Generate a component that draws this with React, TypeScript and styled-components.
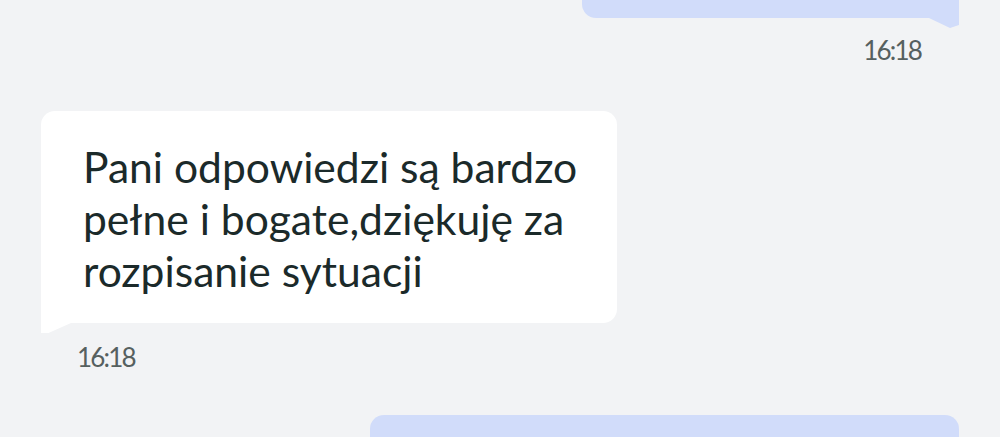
import styled, { createGlobalStyle } from "styled-components";

const GlobalStyle = createGlobalStyle`
  html, body {
    margin: 0;
    padding: 0;
    background: #f2f3f5;
  }
  body {
    font-family: Lato, "Noto Sans", sans-serif;
    overflow: hidden;
  }
`;

// Whole chat area
const Thread = styled.div`
  width: 1000px;
  height: 437px;
  display: flex;
  flex-direction: column;
  overflow: hidden;
  background: #f2f3f5;
  & > * {
    flex-shrink: 0;
  }
`;

// Bubble, side decides colour and tail corner
const Bubble = styled.div<{ $mine?: boolean }>`
  position: relative;
  box-sizing: border-box;
  background: ${(p) => (p.$mine ? "#d1dcfa" : "#ffffff")};
  border-radius: 14px;
  border-bottom-${(p) => (p.$mine ? "right" : "left")}-radius: 0;
  align-self: ${(p) => (p.$mine ? "flex-end" : "flex-start")};
  color: #1b2a2a;
  font-size: 42.6px;
  line-height: 52px;

  &::after {
    content: "";
    position: absolute;
    top: 100%;
    ${(p) => (p.$mine ? "right: 0;" : "left: 0;")}
    width: 30px;
    height: 10px;
    background: inherit;
    clip-path: ${(p) =>
      p.$mine
        ? "polygon(0 0, 100% 0, 100% 70%, 70% 100%)"
        : "polygon(0 0, 100% 0, 25% 100%, 0 100%)"};
  }
`;

const TopBubble = styled(Bubble)`
  width: 377px;
  height: 50px;
  margin-top: -32px;
  margin-right: 41px;
`;

const IncomingBubble = styled(Bubble)`
  width: 576px;
  margin-top: 46px;
  margin-left: 41px;
  padding: 30px 20px 26px 42px;
`;

const BottomBubble = styled(Bubble)`
  width: 589px;
  height: 60px;
  margin-top: 43px;
  margin-right: 41px;
  border-bottom-right-radius: 14px;
  &::after {
    display: none;
  }
`;

const Time = styled.div<{ $mine?: boolean }>`
  align-self: ${(p) => (p.$mine ? "flex-end" : "flex-start")};
  font-size: 26px;
  line-height: 30px;
  color: #56605f;
  letter-spacing: -1.8px;
  margin: ${(p) => (p.$mine ? "17px 79px 0 0" : "19px 0 0 77px")};
`;

export default function App() {
  return (
    <>
      <GlobalStyle />
      <Thread>
        <TopBubble $mine />
        <Time $mine>16:18</Time>
        <IncomingBubble>
          Pani odpowiedzi są bardzo
          <br />
          pełne i bogate,dziękuję za
          <br />
          rozpisanie sytuacji
        </IncomingBubble>
        <Time>16:18</Time>
        <BottomBubble $mine />
      </Thread>
    </>
  );
}
